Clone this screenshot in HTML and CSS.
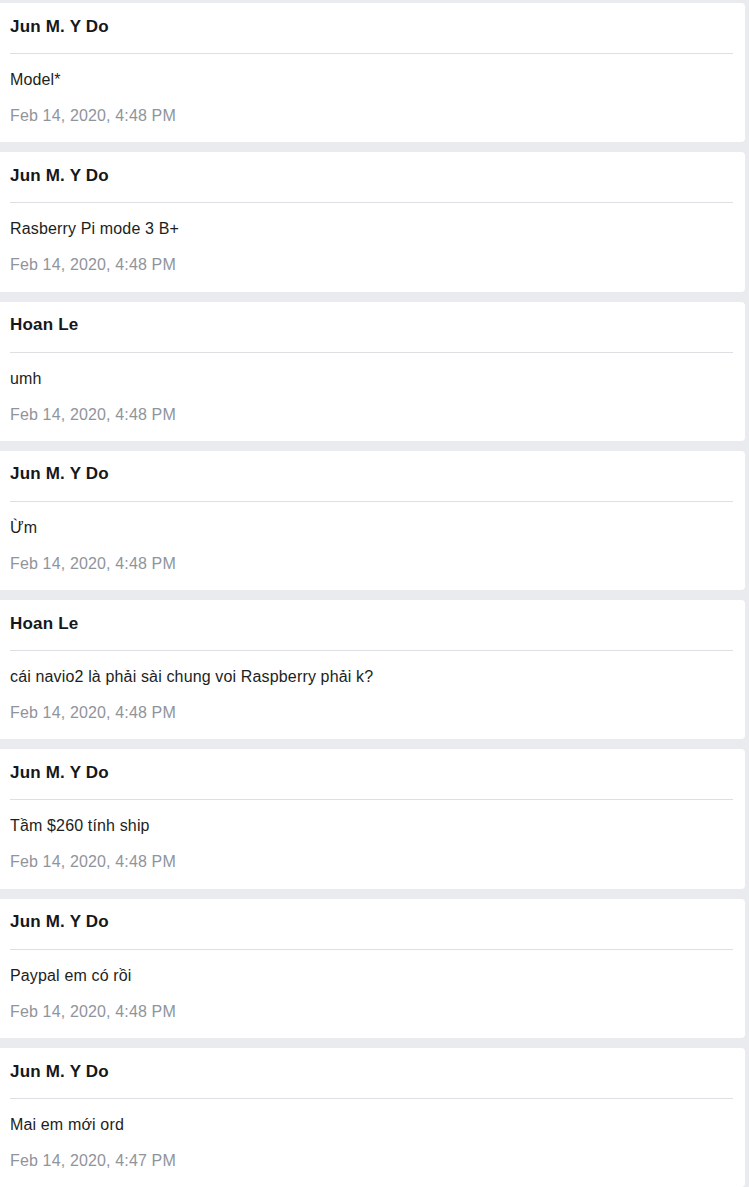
FILE: index.html
```html
<!DOCTYPE html>
<html lang="vi">
<head>
<meta charset="utf-8">
<title>Messages</title>
<link rel="stylesheet" href="styles.css">
</head>
<body>
<div class="list">
  <div class="card">
    <div class="head"><span class="name">Jun M. Y Do</span></div>
    <div class="body"><div class="msg">Model*</div><div class="time">Feb 14, 2020, 4:48 PM</div></div>
  </div>
  <div class="card">
    <div class="head"><span class="name">Jun M. Y Do</span></div>
    <div class="body"><div class="msg">Rasberry Pi mode 3 B+</div><div class="time">Feb 14, 2020, 4:48 PM</div></div>
  </div>
  <div class="card">
    <div class="head"><span class="name">Hoan Le</span></div>
    <div class="body"><div class="msg">umh</div><div class="time">Feb 14, 2020, 4:48 PM</div></div>
  </div>
  <div class="card">
    <div class="head"><span class="name">Jun M. Y Do</span></div>
    <div class="body"><div class="msg">Ừm</div><div class="time">Feb 14, 2020, 4:48 PM</div></div>
  </div>
  <div class="card">
    <div class="head"><span class="name">Hoan Le</span></div>
    <div class="body"><div class="msg">cái navio2 là phải sài chung voi Raspberry phải k?</div><div class="time">Feb 14, 2020, 4:48 PM</div></div>
  </div>
  <div class="card">
    <div class="head"><span class="name">Jun M. Y Do</span></div>
    <div class="body"><div class="msg">Tầm $260 tính ship</div><div class="time">Feb 14, 2020, 4:48 PM</div></div>
  </div>
  <div class="card">
    <div class="head"><span class="name">Jun M. Y Do</span></div>
    <div class="body"><div class="msg">Paypal em có rồi</div><div class="time">Feb 14, 2020, 4:48 PM</div></div>
  </div>
  <div class="card">
    <div class="head"><span class="name">Jun M. Y Do</span></div>
    <div class="body"><div class="msg">Mai em mới ord</div><div class="time">Feb 14, 2020, 4:47 PM</div></div>
  </div>
</div>
</body>
</html>
```
FILE: styles.css
```css
html, body {
  margin: 0;
  padding: 0;
  background: #e9ebee;
}
body {
  font-family: "Liberation Sans", Arial, sans-serif;
  color: #1c1e21;
}
.list {
  display: flex;
  flex-direction: column;
  gap: 10px;
  padding: 3px 4px 0 0;
}
.card {
  background: #fff;
  border-radius: 0 4px 4px 0;
  padding: 0 12px 0 10px;
  height: 139.3px;
  box-sizing: border-box;
}
.head {
  padding: 13.5px 0 16.5px;
  border-bottom: 1px solid #dddfe2;
}
.name {
  display: block;
  font-size: 17px;
  font-weight: bold;
  line-height: 20px;
  letter-spacing: 0.2px;
  color: #15171a;
}
.body {
  padding: 16px 0 0;
}
.msg {
  font-size: 16px;
  line-height: 20px;
  letter-spacing: 0.15px;
}
.time {
  margin-top: 16px;
  font-size: 16px;
  line-height: 20px;
  letter-spacing: 0.15px;
  color: #90949c;
}
```
